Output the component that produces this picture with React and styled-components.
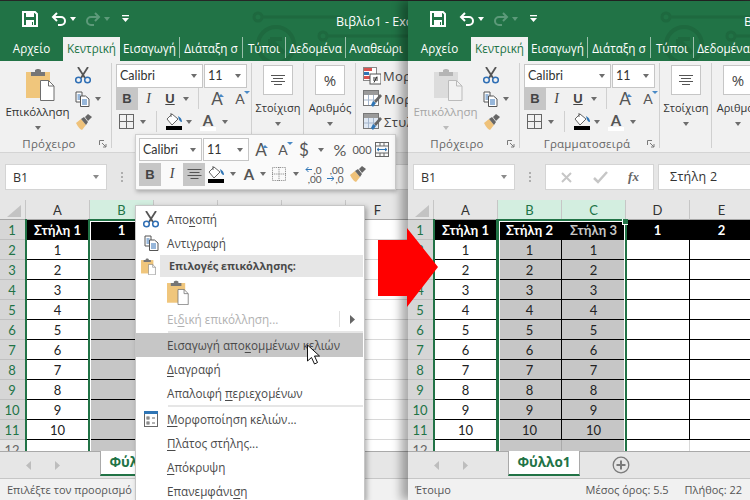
import React from "react";
import styled, { createGlobalStyle } from "styled-components";

const UI = `"Open Sans", "Noto Sans", sans-serif`;
const CAL = `Lato, "Open Sans", sans-serif`;
const GREEN = "#217346";

const Global = createGlobalStyle`
  html, body { margin: 0; padding: 0; background: #262626; }
  * { box-sizing: border-box; }
  u { text-underline-offset: 2px; text-decoration-thickness: 1px; }
`;

const Page = styled.div`
  position: relative; width: 750px; height: 500px; overflow: hidden; background: #262626;
  font-family: ${UI};
`;
const Win = styled.div`
  position: absolute; top: 1px; left: ${p => p.$x}px; width: ${p => p.$w}px; height: 499px;
  display: flex; flex-direction: column; background: #e6e6e6; z-index: ${p => p.$z};
  box-shadow: ${p => (p.$shadow ? "-7px 0 9px rgba(0,0,0,.33)" : "none")};
`;
const Clip = styled.div`
  width: 100%; height: 100%; overflow: hidden; display: flex; flex-direction: column;
`;
const Head = styled.div`
  position: relative; height: 60px; flex: none; width: 750px; background: ${GREEN}; display: flex; flex-direction: column;
`;
const TitleBar = styled.div`
  position: relative; height: 36px; flex: none; display: flex; align-items: center; padding-left: 20px;
`;
const Qat = styled.div`display: flex; align-items: center;`;
const Slot = styled.span`display: inline-flex; margin-left: ${p => p.$m || 0}px;`;
const DocTitle = styled.div`
  position: absolute; left: 336px; top: 13px; color: #fff; font-size: 12.5px; line-height: 16px; white-space: nowrap;
`;
const Pattern = styled.svg`position: absolute; left: 240px; top: 0;`;
const TabStrip = styled.div`
  position: relative; height: 24px; flex: none; display: flex; width: 750px;
`;
const Tab = styled.div`
  width: ${p => p.$w}px; flex: none; height: ${p => (p.$on ? 24 : 21)}px; font-size: 11.7px; line-height: 22px; text-align: center;
  white-space: nowrap; overflow: hidden;
  color: ${p => (p.$on ? GREEN : "#fff")}; background: ${p => (p.$on ? "#f1f1f1" : "transparent")};
  border-right: ${p => (p.$sep ? "1px solid rgba(255,255,255,.55)" : "none")};
`;
const Ribbon = styled.div`
  height: 92px; flex: none; background: #f1f1f1; display: flex; width: 750px; border-bottom: 1px solid #d4d4d4;
`;
const Group = styled.div`
  width: ${p => p.$w}px; flex: none; height: 89px; position: relative; margin-top: 2px;
  display: flex; flex-direction: column;
  &::after { content: ""; position: absolute; right: 0; top: 0; width: 1px; height: 85px; background: #d0d0d0; }
`;
const GroupBody = styled.div`flex: 1; display: flex; min-height: 0;`;
const GroupLabel = styled.div`
  height: 16px; flex: none; font-size: 11.5px; line-height: 16px; color: #666; text-align: center; padding-right: ${p => p.$pr || 0}px;
  letter-spacing: .2px; white-space: nowrap;
`;
const Launcher = styled.svg`position: absolute; right: 5px; bottom: 4px;`;
const PasteCol = styled.div`
  width: 75px; flex: none; display: flex; flex-direction: column; align-items: center; padding-top: 5px;
  color: ${p => (p.$off ? "#a6a6a6" : "#333")};
`;
const PasteIcon = styled.div`display: flex; margin-left: 5px;`;
const PasteText = styled.div`line-height: 16px; margin-top: 3px; white-space: nowrap; font-size: 11.5px;`;
const Tiny = styled.div`
  width: 0; height: 0; flex: none; border-left: 3.5px solid transparent; border-right: 3.5px solid transparent;
  border-top: 4px solid ${p => p.$c || "#6d6d6d"}; margin: ${p => p.$m || "0"};
`;
const SmallCol = styled.div`
  width: 36px; flex: none; display: flex; flex-direction: column; align-items: flex-start; padding: 4px 0 0 0;
  gap: 6px;
`;
const SmallRow = styled.div`display: flex; align-items: center; gap: 5px; height: 17px;`;
const FontCol = styled.div`
  display: flex; flex-direction: column; padding: 1px 0 0 4px; width: 100%;
`;
const FontRow = styled.div`display: flex; height: 23px; align-items: center;`;
const SelectBox = styled.div`
  width: ${p => p.$w}px; height: ${p => p.$h || 24}px; flex: none; background: #fff; border: 1px solid #c6c6c6; display: flex; align-items: center;
  justify-content: space-between; padding: 0 5px 0 3px; font-family: ${CAL}; font-size: 12.5px; color: #333; margin-right: 1px;
`;
const Btn = styled.div`
  width: ${p => p.$w}px; height: 23px; flex: none; display: flex; align-items: center; justify-content: center; position: relative;
  background: ${p => (p.$on ? "#c6c6c6" : "transparent")}; color: #4d4d4d;
`;
const LetterB = styled.span`font: bold 13px "Liberation Sans", sans-serif; color: #444;`;
const LetterI = styled.span`font: italic 14px "Liberation Serif", serif; color: #444;`;
const LetterU = styled.span`font: bold 13px "Liberation Sans", sans-serif; color: #444; text-decoration: underline;`;
const BigA = styled.span`font: ${p => p.$s || 17}px ${CAL}; color: #555; position: relative; line-height: 18px; padding-right: 2px;`;
const Up = styled.i`
  position: absolute; right: ${p => p.$r || 1}px; top: ${p => p.$t || 4}px; width: 0; height: 0;
  border-left: 3px solid transparent; border-right: 3px solid transparent;
  ${p => (p.$down ? "border-top: 3px solid #4a8ac6;" : "border-bottom: 3px solid #4a8ac6;")}
`;
const VLine = styled.div`width: 1px; height: 21px; background: #d0d0d0; flex: none; margin: 0 ${p => p.$m || 5}px;`;
const ColorStack = styled.div`display: flex; flex-direction: column; align-items: center;`;
const ColorBar = styled.div`width: 16px; height: 4px; background: ${p => p.$c};`;
const GlyphA = styled.span`font: bold 15px ${CAL}; color: #555; line-height: 14px;`;
const CenterCol = styled.div`
  flex: 1; display: flex; flex-direction: column; align-items: center; padding-top: 2px; color: #333;
`;
const BigBox = styled.div`
  width: 30px; height: 30px; background: #fff; border: 1px solid #c6c6c6; display: flex; align-items: center; justify-content: center;
  color: #444; font-size: 15px;
`;
const BigLabel = styled.div`font-size: 11px; line-height: 16px; margin-top: 5px; white-space: nowrap;`;
const StyleCol = styled.div`display: flex; flex-direction: column; gap: 1px; padding: 2px 0 0 7px; width: 100%;`;
const StyleRow = styled.div`
  display: flex; align-items: center; height: 22px; gap: 2px; font-size: 13px; color: #444; letter-spacing: .4px; white-space: nowrap;
  svg { flex: none; }
`;
const FormulaBar = styled.div`
  height: 47px; flex: none; padding: 11px 0 0 5px; display: flex; align-items: flex-start; width: 750px;
`;
const NameBox = styled.div`
  width: 102px; height: 26px; background: #fff; border: 1px solid #d4d4d4; display: flex; align-items: center; justify-content: space-between;
  padding: 0 7px; font-size: 12.5px; color: #333; flex: none;
`;
const Dots = styled.div`
  width: 30px; flex: none; height: 26px; display: flex; flex-direction: column; align-items: center; justify-content: center; gap: 2px;
`;
const Dot = styled.div`width: 2px; height: 2px; background: #aeaeae;`;
const FxBox = styled.div`
  width: 109px; height: 26px; flex: none; background: #fff; border: 1px solid #d4d4d4; display: flex; align-items: center;
  justify-content: space-around; padding: 0 4px; margin-right: 4px; font: italic bold 13px "Liberation Serif", serif; color: #666;
`;
const InputBox = styled.div`
  flex: 1; height: 26px; background: #fff; border: 1px solid #d4d4d4; padding: 0 11px; line-height: 23px; font-size: 12.5px; color: #333; letter-spacing: .3px;
`;
const Sheet = styled.div`
  position: relative; height: 251px; flex: none; overflow: hidden; background: #fff; width: 750px;
`;
const Grid = styled.div`
  display: grid; grid-template-columns: 26px repeat(${p => p.$n}, 64px); grid-auto-rows: 20px;
  font-family: ${CAL}; font-size: 13px;
`;
const Corner = styled.div`
  background: #e6e6e6; border-bottom: 1px solid #a6a6a6; border-right: 1px solid #c6c6c6; position: relative; overflow: hidden;
`;
const ColHead = styled.div`
  background: ${p => (p.$on ? "#d3eee0" : "#e6e6e6")}; color: ${p => (p.$on ? GREEN : "#333")};
  border-bottom: 1px solid ${p => (p.$on ? GREEN : "#a6a6a6")}; border-right: 1px solid #c6c6c6; text-align: center; line-height: 20px;
`;
const RowHead = styled.div`
  background: ${p => (p.$on ? "#d6d6d6" : "#e6e6e6")}; color: ${p => (p.$on ? GREEN : "#666")};
  border-bottom: 1px solid #c0c0c0; text-align: center; line-height: 20px; padding-right: 2px;
`;
const cellBg = { head: "#000", sel: "#c6c6c6", body: "#fff", blank: "#fff", selblank: "#c6c6c6" };
const Cell = styled.div`
  background: ${p => cellBg[p.$k]}; text-align: center; line-height: 20px; white-space: nowrap;
  color: ${p => (p.$k === "head" ? (p.$dim ? "#c6c6c6" : "#fff") : "#222")}; font-weight: ${p => (p.$k === "head" ? 700 : 400)};
  border-right: 1px solid ${p => (p.$k === "blank" ? "#d8d8d8" : p.$k === "selblank" ? "#aaa" : "#000")};
  border-bottom: 1px solid ${p => (p.$k === "blank" ? "#d8d8d8" : p.$k === "selblank" ? "#c6c6c6" : "#000")};
`;
const Ants = styled.div`
  position: absolute; left: ${p => p.$x}px; top: 19px; bottom: 0; width: ${p => p.$w}px;
  border: 2px solid ${GREEN}; border-top: ${p => (p.$top ? `2px solid ${GREEN}` : "none")}; border-bottom: none;
  box-shadow: ${p => (p.$top ? "inset 0 1px 0 #fff, inset 1px 0 0 #fff, inset -1px 0 0 #fff" : "none")};
`;
const Handle = styled.div`
  position: absolute; right: -3px; top: -2px; width: 6px; height: 6px; background: ${GREEN}; border: 1px solid #fff; border-right: none; border-top: none;
`;
const TabsBar = styled.div`
  height: 28px; flex: none; background: #e6e6e6; border-top: 1px solid #a9a9a9; border-bottom: 1px solid #c6c6c6; display: flex; align-items: flex-start; width: 750px;
`;
const NavArrows = styled.div`
  width: 100px; height: 26px; flex: none; display: flex; align-items: center; gap: 22px; padding-left: 26px;
`;
const SheetTab = styled.div`
  width: 72px; height: 25px; flex: none; margin-top: -1px; background: #fff; border: 1px solid #a9a9a9; border-bottom: 2px solid ${GREEN}; color: ${GREEN};
  font: bold 13.5px/22px ${UI}; text-align: center; border-top: none;
`;
const AddBtn = styled.div`margin: 4px 0 0 32px; display: flex;`;
const StatusBar = styled.div`
  flex: 1; background: #f1f1f1; display: flex; justify-content: space-between; align-items: center; padding: 0 8px 0 7px; font-size: 11px; color: #555;
  white-space: nowrap; width: 100%;
`;
const Stats = styled.div`display: flex; gap: 16px;`;

const Mini = styled.div`
  position: absolute; left: 135px; top: 134px; width: 261px; height: 56px; background: #fafafa; border: 1px solid #cfcfcf;
  box-shadow: 1px 2px 4px rgba(0,0,0,.25); padding: 3px 3px; display: flex; flex-direction: column; gap: 1px; z-index: 5;
`;
const MiniRow = styled.div`display: flex; align-items: center; height: 24px;`;
const DecStack = styled.div`
  display: flex; flex-direction: column; align-items: flex-end; font: 10px/8px ${CAL}; color: #555; gap: 1px; width: 17px;
`;
const DecLine = styled.div`display: flex; align-items: center; justify-content: flex-end; gap: 1px; width: 100%;`;
const Menu = styled.div`
  position: absolute; left: 135px; top: 205px; width: 230px; height: 295px; background: #fff; border: 1px solid #c6c6c6; border-bottom: none; padding-top: 1px;
  box-shadow: 2px 2px 5px rgba(0,0,0,.3); z-index: 5; color: #4a4a4a; overflow: hidden;
`;
const Item = styled.div`
  height: ${p => p.$h || 24}px; display: flex; align-items: center; white-space: nowrap; margin-right: 1px; position: relative;
  background: ${p => (p.$hot ? "#c6c6c6" : "transparent")}; color: ${p => (p.$off ? "#b1b1b1" : "#4a4a4a")};
`;
const ItemIcon = styled.div`width: ${p => p.$w || 30}px; flex: none; display: flex; justify-content: center;`;
const ItemText = styled.div`
  flex: 1; line-height: ${p => p.$h || 24}px; height: 100%; display: block;
  font-weight: ${p => (p.$b ? 700 : 400)}; font-size: ${p => (p.$b ? 10.8 : 11.7)}px;
  background: ${p => (p.$b ? "#e6e6e6" : "transparent")}; padding-left: ${p => (p.$b ? 9 : 1)}px;
`;
const PasteChoice = styled.div`display: flex; height: 100%; align-items: center;`;
const MenuSep = styled.div`height: 2px; background: #e6e6e6; margin: 0 1px 0 32px;`;
const SubMark = styled.div`
  position: absolute; right: 0; top: 4px; height: 16px; width: 24px; border-left: 1px solid #e0e0e0; display: flex; align-items: center; justify-content: center;
`;
const Overlay = styled.svg`position: absolute; left: ${p => p.$x}px; top: ${p => p.$y}px; z-index: 10;`;

/* ---------- icons ---------- */
const Save = () => (
  <svg width="16" height="16" viewBox="0 0 16 16"><path d="M1 1h12l2 2v12H1z" fill="none" stroke="#fff" strokeWidth="2" /><rect x="4" y="1" width="8" height="5" fill="#fff" /><rect x="4" y="9" width="8" height="6" fill="#fff" /><rect x="10" y="11" width="1" height="3" fill={GREEN} /></svg>
);
const Undo = ({ c = "#fff", flip }) => (
  <svg width="16" height="14" viewBox="0 0 16 14" style={flip ? { transform: "scaleX(-1)" } : undefined}><path d="M2 5h8a4 4 0 0 1 0 8H7" fill="none" stroke={c} strokeWidth="2" /><path d="M6 1L2 5l4 4" fill="none" stroke={c} strokeWidth="2" /></svg>
);
const Customize = () => (
  <svg width="7" height="8" viewBox="0 0 7 8"><rect x="0" y="0" width="7" height="1.3" fill="#fff" /><path d="M0 3h7L3.5 7z" fill="#fff" /></svg>
);
const Circuit = () => (
  <Pattern width="300" height="60" viewBox="0 0 300 60" fill="none" stroke="#1e693f" strokeWidth="3">
    <circle cx="18" cy="16" r="4" /><path d="M22 16h80" />
    <circle cx="83" cy="35" r="4" /><path d="M87 35h120" />
    <circle cx="36" cy="44" r="18" strokeWidth="4" />
    <path d="M30 38h12M30 38v12M30 38l14 14" strokeWidth="4" />
  </Pattern>
);
const LaunchIcon = () => (
  <Launcher width="8" height="8" viewBox="0 0 8 8"><path d="M.5 5V.5H5M3 3l4 4M7 4v3H4" fill="none" stroke="#7a7a7a" strokeWidth="1" /></Launcher>
);
const Clipboard = ({ off, w = 29, h = 33 }) => {
  const b = off ? "#dcdcdc" : "#f0c67c", c = off ? "#b5b5b5" : "#767676", d = off ? "#f2f2f2" : "#fff", l = off ? "#bbb" : "#6e6e6e";
  return (
    <svg width={w} height={h} viewBox="0 0 29 33">
      <rect x="0" y="4" width="24" height="26" fill={b} />
      <path d="M5 8V4h4V2l2-1h2l2 1v2h4v4z" fill={c} />
      <path d="M14.5 12.5h8l5.5 5.5v14.500h-13.500z" fill={d} stroke={l} />
      <path d="M22.500 12.500v5.500h5.500" fill="none" stroke={l} />
    </svg>
  );
};
const Scissors = () => (
  <svg width="16" height="17" viewBox="0 0 16 17" fill="none">
    <path d="M3 0l7 11M13 0L6 11" stroke="#555" strokeWidth="1.800" />
    <circle cx="3.500" cy="13" r="2.800" stroke="#2f6fb5" strokeWidth="1.500" /><circle cx="12.500" cy="13" r="2.800" stroke="#2f6fb5" strokeWidth="1.500" />
  </svg>
);
const Copy = () => (
  <svg width="15" height="16" viewBox="0 0 15 16" fill="none">
    <path d="M1 1h6v10H1z" fill="#fff" stroke="#555" /><path d="M2.500 4h3M2.500 6h3M2.500 8h3" stroke="#2f6fb5" />
    <path d="M5.500 5h5l3.500 3v7.500H5.500z" fill="#fff" stroke="#555" /><path d="M7 9h5M7 11h5M7 13h5" stroke="#2f6fb5" />
  </svg>
);
const Brush = () => (
  <svg width="17" height="16" viewBox="0 0 17 16">
    <path d="M1 9l5-4 5 6-4 5q-3-1-6-7z" fill="#efc27a" />
    <path d="M6 5l3-2 4 5-2 3z" fill="#666" /><path d="M10 3l3-3 4 3-4 4z" fill="#666" />
  </svg>
);
const Borders = ({ c = "#666", s = 15, dotted }) => (
  <svg width={s} height={s} viewBox="0 0 15 15" fill="none" stroke={c} strokeDasharray={dotted ? "1 1" : undefined}><rect x=".5" y=".5" width="14" height="14" /><path d="M7.500 0v15M0 7.500h15" /></svg>
);
const Fill = () => (
  <svg width="17" height="13" viewBox="0 0 17 13"><path d="M6 1L1 6l5 6 6-6z" fill="#fff" stroke="#666" /><path d="M5 4V0" stroke="#666" /><path d="M12 3q4 2 4 6-3 0-4-6z" fill="#2f75b5" /></svg>
);
const AlignLines = ({ w = 14 }) => (
  <svg width={w} height="11" viewBox="0 0 14 11" stroke="#555"><path d="M0 .5h14M2 3.500h10M0 6.500h14M3 9.500h8" /></svg>
);
const CondFmt = () => (
  <svg width="18" height="18" viewBox="0 0 18 18" fill="none"><rect x=".5" y=".5" width="13" height="13" fill="#fff" stroke="#888" /><rect x="1" y="1" width="8" height="3" fill="#d9534f" /><rect x="1" y="5" width="5" height="3" fill="#2f75b5" /><rect x="1" y="9" width="6" height="3" fill="#d9534f" /><rect x="7" y="7" width="11" height="10" fill="#fff" stroke="#555" /><path d="M10 11h5M10 13h5M14 9.500l-3 6" stroke="#333" /></svg>
);
const TableFmt = ({ light }) => (
  <svg width="19" height="18" viewBox="0 0 19 18" fill="none"><rect x=".5" y=".5" width="15" height="15" fill={light ? "#dfe8f3" : "#fff"} stroke="#777" /><rect x="1" y="1" width="14" height="4" fill="#9a9a9a" /><path d="M5.500 5v10M10.500 5v10M1 10h14" stroke="#a5b6cc" /><path d="M8 15l2-4 3 2-3 4z" fill="#2f75b5" /><path d="M11 11l6-7 2 2-6 7z" fill="#666" /></svg>
);
const ColWidth = () => (
  <svg width="14" height="15" viewBox="0 0 14 15" fill="none" stroke="#666"><rect x=".5" y=".5" width="13" height="14" /><path d="M0 4h14M0 11h14M5 0v4M9 0v4M5 11v4M9 11v4" /><path d="M2 7.500h10M4 6l-2 1.500L4 9M10 6l2 1.500L10 9" stroke="#2f75b5" /></svg>
);
const DecArrow = ({ right }) => (
  <svg width="8" height="7" viewBox="0 0 8 7" fill="none" stroke="#2f75b5"><path d={right ? "M0 3.500h7M4.500 1L7 3.500 4.500 6" : "M8 3.500H1M3.500 1L1 3.500 3.500 6"} /></svg>
);
const FormatCells = () => (
  <svg width="14" height="16" viewBox="0 0 14 16" fill="none"><rect x=".5" y=".5" width="13" height="15" fill="#fff" stroke="#666" /><rect x="0" y="0" width="14" height="3" fill="#2f75b5" /><rect x="3" y="6" width="2" height="2" stroke="#666" /><rect x="3" y="11" width="2" height="2" stroke="#666" /><path d="M8 7h3M8 12h3" stroke="#666" /></svg>
);
const Tri = ({ left, c = "#bdbdbd" }) => (
  <svg width="6" height="9" viewBox="0 0 6 9"><path d={left ? "M5 0v9L0 4.500z" : "M1 0v9l5-4.500z"} fill={c} /></svg>
);

/* ---------- parts ---------- */
const TABS = [
  ["Αρχείο", 63, false], ["Κεντρική", 57, false], ["Εισαγωγή", 60, true], ["Διάταξη σ", 63, true],
  ["Τύποι", 43, true], ["Δεδομένα", 60, true], ["Αναθεώρι", 60, false],
];

const ExcelRibbon = ({ off, fontLabel }) => (
  <Ribbon>
    <Group $w={112}>
      <GroupBody>
        <PasteCol $off={off}>
          <PasteIcon><Clipboard off={off} /></PasteIcon>
          <PasteText>Επικόλληση</PasteText>
          <Tiny $m="6px 0 0" $c={off ? "#bbb" : "#6d6d6d"} />
        </PasteCol>
        <SmallCol>
          <SmallRow><Scissors /></SmallRow>
          <SmallRow><Copy /><Tiny /></SmallRow>
          <SmallRow><Brush /></SmallRow>
        </SmallCol>
      </GroupBody>
      <GroupLabel $pr={14}>Πρόχειρο</GroupLabel>
      <LaunchIcon />
    </Group>
    <Group $w={140}>
      <GroupBody>
        <FontCol>
          <FontRow>
            <SelectBox $w={87}>Calibri<Tiny /></SelectBox>
            <SelectBox $w={43}>11<Tiny /></SelectBox>
          </FontRow>
          <FontRow>
            <Btn $w={22} $on><LetterB>B</LetterB></Btn>
            <Btn $w={21}><LetterI>I</LetterI></Btn>
            <Btn $w={22}><LetterU>U</LetterU></Btn>
            <Tiny $m="0 3px 0 2px" />
            <VLine $m={6} />
            <Btn $w={26}><BigA>A<Up /></BigA></Btn>
            <Btn $w={20}><BigA $s={14}>A<Up $down $r={-3} $t={1} /></BigA></Btn>
          </FontRow>
          <FontRow>
            <Btn $w={20}><Borders /></Btn>
            <Tiny $m="0 4px 0 4px" />
            <VLine $m={6} />
            <Btn $w={22}><ColorStack><Fill /><ColorBar $c="#000" /></ColorStack></Btn>
            <Tiny $m="0 4px 0 1px" />
            <Btn $w={24}><ColorStack><GlyphA>A</GlyphA><ColorBar $c="#fff" /></ColorStack></Btn>
            <Tiny $m="0 0 0 2px" />
          </FontRow>
        </FontCol>
      </GroupBody>
      <GroupLabel $pr={6}>{fontLabel}</GroupLabel>
      <LaunchIcon />
    </Group>
    <Group $w={52}>
      <CenterCol><BigBox><AlignLines /></BigBox><BigLabel>Στοίχιση</BigLabel><Tiny $m="6px 0 0" /></CenterCol>
    </Group>
    <Group $w={52}>
      <CenterCol><BigBox>%</BigBox><BigLabel>Αριθμός</BigLabel><Tiny $m="6px 0 0" /></CenterCol>
    </Group>
    <Group $w={100}>
      <StyleCol>
        <StyleRow><CondFmt />Μορ</StyleRow>
        <StyleRow><TableFmt />Μορ</StyleRow>
        <StyleRow><TableFmt light />Στυλ</StyleRow>
      </StyleCol>
    </Group>
  </Ribbon>
);

const Formula = ({ value }) => (
  <FormulaBar>
    <NameBox>B1<Tiny $c="#8a8a8a" /></NameBox>
    <Dots><Dot /><Dot /><Dot /></Dots>
    <FxBox>
      <svg width="13" height="13" viewBox="0 0 13 13" stroke="#c6c6c6" strokeWidth="2"><path d="M2 2l9 9M11 2l-9 9" /></svg>
      <svg width="15" height="13" viewBox="0 0 15 13" stroke="#c6c6c6" strokeWidth="2.500" fill="none"><path d="M1 7l4 4 9-10" /></svg>
      <span>fx</span>
    </FxBox>
    <InputBox>{value}</InputBox>
  </FormulaBar>
);

const range = n => Array.from({ length: n }, (_, i) => i + 1);

const Spreadsheet = ({ cols, children }) => (
  <Sheet>
    <Grid $n={cols.length}>
      <Corner>
        <svg width="25" height="19" viewBox="0 0 25 19" style={{ display: "block" }}><path d="M21 5v12H7z" fill="#c3c3c3" /></svg>
      </Corner>
      {cols.map(c => <ColHead key={c.name} $on={c.on}>{c.name}</ColHead>)}
      {range(12).map(r => (
        <React.Fragment key={r}>
          <RowHead $on={r < 12}>{r}</RowHead>
          {cols.map(c => {
            if (r === 1) return <Cell key={c.name} $k={c.plain ? "blank" : "head"} $dim={c.dim}>{c.head}</Cell>;
            if (r === 12) return <Cell key={c.name} $k={c.sel ? "selblank" : "blank"} />;
            const kind = c.plain ? "blank" : c.sel ? "sel" : "body";
            return <Cell key={c.name} $k={kind}>{c.vals ? r - 1 : ""}</Cell>;
          })}
        </React.Fragment>
      ))}
    </Grid>
    {children}
  </Sheet>
);

const SheetTabs = () => (
  <TabsBar>
    <NavArrows><Tri left /><Tri /></NavArrows>
    <SheetTab>Φύλλο1</SheetTab>
    <AddBtn>
      <svg width="18" height="18" viewBox="0 0 18 18" fill="none" stroke="#7a7a7a"><circle cx="9" cy="9" r="7.800" strokeWidth="1.300" /><path d="M9 4.500v9M4.500 9h9" strokeWidth="2" /></svg>
    </AddBtn>
  </TabsBar>
);

const ExcelWindow = ({ x, w, z, shadow, off, formula, cols, ants, status, stats, fontLabel }) => (
  <Win $x={x} $w={w} $z={z} $shadow={shadow}>
    <Clip>
      <Head>
        <Circuit />
        <TitleBar>
          <Qat>
            <Slot $m={2}><Save /></Slot>
            <Slot $m={13}><Undo /></Slot>
            <Slot $m={3}><Tiny $c="#fff" /></Slot>
            <Slot $m={9}><Undo c="#5d9a7a" flip /></Slot>
            <Slot $m={3}><Tiny $c="#5d9a7a" /></Slot>
            <Slot $m={12}><Customize /></Slot>
          </Qat>
          <DocTitle>Βιβλίο1 - Excel</DocTitle>
        </TitleBar>
        <TabStrip>
          {TABS.map(([t, wd, sep], i) => <Tab key={t} $w={wd} $sep={sep} $on={i === 1}>{t}</Tab>)}
        </TabStrip>
      </Head>
      <ExcelRibbon off={off} fontLabel={fontLabel} />
      <Formula value={formula} />
      <Spreadsheet cols={cols}>{ants}</Spreadsheet>
      <SheetTabs />
      <StatusBar>
        <span>{status}</span>
        {stats && <Stats><span>Μέσος όρος: 5.5</span><span>Πλήθος: 22</span></Stats>}
      </StatusBar>
    </Clip>
  </Win>
);

const MiniToolbar = () => (
  <Mini>
    <MiniRow>
      <SelectBox $w={63} $h={23}>Calibri<Tiny /></SelectBox>
      <SelectBox $w={46} $h={23}>11<Tiny /></SelectBox>
      <Btn $w={24}><BigA>A<Up /></BigA></Btn>
      <Btn $w={20}><BigA $s={14}>A<Up $down $r={-3} $t={1} /></BigA></Btn>
      <Btn $w={22}><BigA $s={17}>$</BigA></Btn>
      <Tiny $m="0 5px 0 2px" />
      <Btn $w={24}><BigA $s={16}>%</BigA></Btn>
      <Btn $w={20}><BigA $s={11}>000</BigA></Btn>
      <Btn $w={18}><ColWidth /></Btn>
    </MiniRow>
    <MiniRow>
      <Btn $w={22} $on><LetterB>B</LetterB></Btn>
      <Btn $w={22}><LetterI>I</LetterI></Btn>
      <Btn $w={22} $on><AlignLines w={15} /></Btn>
      <Btn $w={22}><ColorStack><Fill /><ColorBar $c="#000" /></ColorStack></Btn>
      <Tiny $m="0 5px 0 3px" />
      <Btn $w={16}><GlyphA>A</GlyphA></Btn>
      <Tiny $m="0 5px 0 3px" />
      <Btn $w={16}><Borders s={14} c="#777" dotted /></Btn>
      <Tiny $m="0 3px 0 6px" />
      <Btn $w={22}>
        <DecStack><DecLine><DecArrow />,0</DecLine><DecLine>,00</DecLine></DecStack>
      </Btn>
      <Btn $w={22}>
        <DecStack><DecLine>,00</DecLine><DecLine><DecArrow right />,0</DecLine></DecStack>
      </Btn>
      <Btn $w={22}><Brush /></Btn>
    </MiniRow>
  </Mini>
);

const ContextMenu = () => (
  <Menu>
    <Item><ItemIcon><Scissors /></ItemIcon><ItemText>Απο<u>κ</u>οπή</ItemText></Item>
    <Item><ItemIcon><Copy /></ItemIcon><ItemText>Αντι<u>γ</u>ραφή</ItemText></Item>
    <Item $h={22}><ItemIcon $w={24}><Clipboard w={15} h={17} /></ItemIcon><ItemText $b $h={22}>Επιλογές επικόλλησης:</ItemText></Item>
    <Item $h={30}><ItemIcon /><ItemText><PasteChoice><Clipboard w={22} h={25} /></PasteChoice></ItemText></Item>
    <Item $off><ItemIcon /><ItemText>Ει<u>δ</u>ική επικόλληση...</ItemText><SubMark><Tri c="#666" /></SubMark></Item>
    <MenuSep />
    <Item $hot><ItemIcon /><ItemText>Εισαγωγή απο<u>κ</u>ομμένων κελιών</ItemText></Item>
    <Item><ItemIcon /><ItemText><u>Δ</u>ιαγραφή</ItemText></Item>
    <Item><ItemIcon /><ItemText>Απαλοιφή <u>π</u>εριεχομένων</ItemText></Item>
    <MenuSep />
    <Item><ItemIcon><FormatCells /></ItemIcon><ItemText><u>Μ</u>ορφοποίηση κελιών...</ItemText></Item>
    <Item><ItemIcon /><ItemText><u>Π</u>λάτος στήλης...</ItemText></Item>
    <Item><ItemIcon /><ItemText><u>Α</u>πόκρυψη</ItemText></Item>
    <Item><ItemIcon /><ItemText>Επανεμφάνι<u>σ</u>η</ItemText></Item>
  </Menu>
);

const leftCols = [
  { name: "A", head: "Στήλη 1", vals: true },
  { name: "B", head: "1", sel: true, on: true },
  { name: "C", head: "" }, { name: "D", head: "" }, { name: "E", head: "" },
  { name: "F", plain: true },
];
const rightCols = [
  { name: "A", head: "Στήλη 1", vals: true },
  { name: "B", head: "Στήλη 2", sel: true, on: true, vals: true },
  { name: "C", head: "Στήλη 3", sel: true, on: true, vals: true, dim: true },
  { name: "D", head: "1" }, { name: "E", head: "2" },
];

export default function App() {
  return (
    <Page>
      <Global />
      <ExcelWindow x={0} w={408} z={1} formula="" cols={leftCols} status="Επιλέξτε τον προορισμό"
        ants={<><Ants $x={25} $w={65} /><Ants $x={88} $w={66} $top><Handle /></Ants></>} />
      <MiniToolbar />
      <ContextMenu />
      <ExcelWindow x={408} w={342} z={6} shadow off formula="Στήλη 2" cols={rightCols} status="Έτοιμο" stats fontLabel="Γραμματοσειρά"
        ants={<><Ants $x={25} $w={65} /><Ants $x={89} $w={130} $top><Handle /></Ants></>} />
      <Overlay $x={378} $y={228} width="60" height="79" viewBox="0 0 60 79"><path d="M0 12h29V0l31 39-31 40V68H0z" fill="#f00" /></Overlay>
      <Overlay $x={306} $y={344} width="15" height="21" viewBox="0 0 15 21"><path d="M1.500 1v16l4-3.500 3 6.500 3-1.500-3-6.500h5z" fill="#fff" stroke="#111" strokeWidth="1" /></Overlay>
    </Page>
  );
}
